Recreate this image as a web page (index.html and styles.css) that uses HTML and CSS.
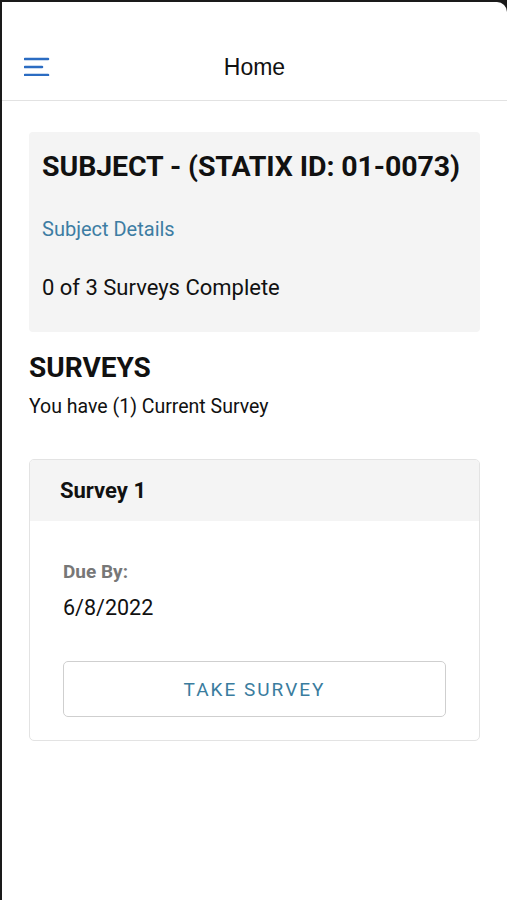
FILE: index.html
```html
<!DOCTYPE html>
<html>
<head>
<meta charset="utf-8">
<link rel="stylesheet" href="styles.css">
</head>
<body>
<div class="frame">
  <header class="topbar">
    <button class="menu" aria-label="Menu">
      <svg width="26" height="20" viewBox="0 0 26 20">
        <path d="M1 3H24M1 11H18M1 19H24" stroke="#2b6cc2" stroke-width="2.6" stroke-linecap="round" fill="none"/>
      </svg>
    </button>
    <h1 class="title">Home</h1>
  </header>
  <main class="content">
    <section class="subject">
      <h2 class="subject-title">SUBJECT - (STATIX ID: 01-0073)</h2>
      <a class="subject-link" href="#">Subject Details</a>
      <p class="subject-count">0 of 3 Surveys Complete</p>
    </section>
    <section class="surveys">
      <h2 class="surveys-title">SURVEYS</h2>
      <p class="surveys-sub">You have (1) Current Survey</p>
    </section>
    <section class="card">
      <div class="card-head">Survey 1</div>
      <div class="card-body">
        <div class="due-label">Due By:</div>
        <div class="due-date">6/8/2022</div>
        <button class="take">TAKE SURVEY</button>
      </div>
    </section>
  </main>
</div>
</body>
</html>
```
FILE: styles.css
```css
html, body {
  margin: 0;
  padding: 0;
  background: #1a1a1a;
}
body {
  font-family: Roboto, "Liberation Sans", Arial, sans-serif;
  color: #111;
}
.frame {
  margin-top: 2px;
  margin-left: 2px;
  height: 898px;
  background: #fff;
  border-top-right-radius: 10px;
  overflow: hidden;
}
.topbar {
  position: relative;
  height: 98px;
  border-bottom: 1px solid #e2e2e2;
  display: flex;
  align-items: flex-end;
  justify-content: center;
}
.menu {
  position: absolute;
  left: 22px;
  top: 54px;
  padding: 0;
  border: 0;
  background: none;
  line-height: 0;
}
.title {
  margin: 0 0 19px 0;
  font-size: 23px;
  font-weight: 400;
  font-family: "Liberation Sans", Arial, sans-serif;
  line-height: 28px;
  color: #111;
}
.content {
  padding: 31px 27px 0 27px;
}
.subject {
  background: #f4f4f4;
  border-radius: 4px;
  padding: 18px 13px 31px 13px;
  display: flex;
  flex-direction: column;
}
.subject-title {
  margin: 0;
  font-size: 28.5px;
  font-weight: 700;
  line-height: 34px;
  letter-spacing: -0.1px;
  white-space: nowrap;
}
.subject-link {
  margin-top: 33px;
  font-size: 20px;
  line-height: 24px;
  color: #3d7da3;
  text-decoration: none;
}
.subject-count {
  margin: 34px 0 0 0;
  font-size: 22px;
  line-height: 26px;
  color: #111;
}
.surveys {
  padding-top: 20px;
}
.surveys-title {
  margin: 0;
  font-size: 28px;
  font-weight: 700;
  line-height: 32px;
}
.surveys-sub {
  margin: 11px 0 0 0;
  font-size: 19.5px;
  line-height: 24px;
}
.card {
  margin-top: 40px;
  border: 1px solid #e3e3e3;
  border-radius: 5px;
  overflow: hidden;
}
.card-head {
  background: #f4f4f4;
  height: 61px;
  display: flex;
  align-items: center;
  padding-left: 30px;
  font-size: 22px;
  font-weight: 700;
}
.card-body {
  padding: 40px 33px 23px 33px;
  display: flex;
  flex-direction: column;
}
.due-label {
  font-size: 19px;
  font-weight: 700;
  color: #777;
  line-height: 22px;
}
.due-date {
  margin-top: 12px;
  font-size: 21.5px;
  line-height: 26px;
  color: #111;
}
.take {
  margin-top: 40px;
  height: 56px;
  border: 1px solid #cfcfcf;
  border-radius: 5px;
  background: #fff;
  font-family: Roboto, "Liberation Sans", Arial, sans-serif;
  font-size: 19px;
  letter-spacing: 2px;
  color: #3a7c9e;
}
```
